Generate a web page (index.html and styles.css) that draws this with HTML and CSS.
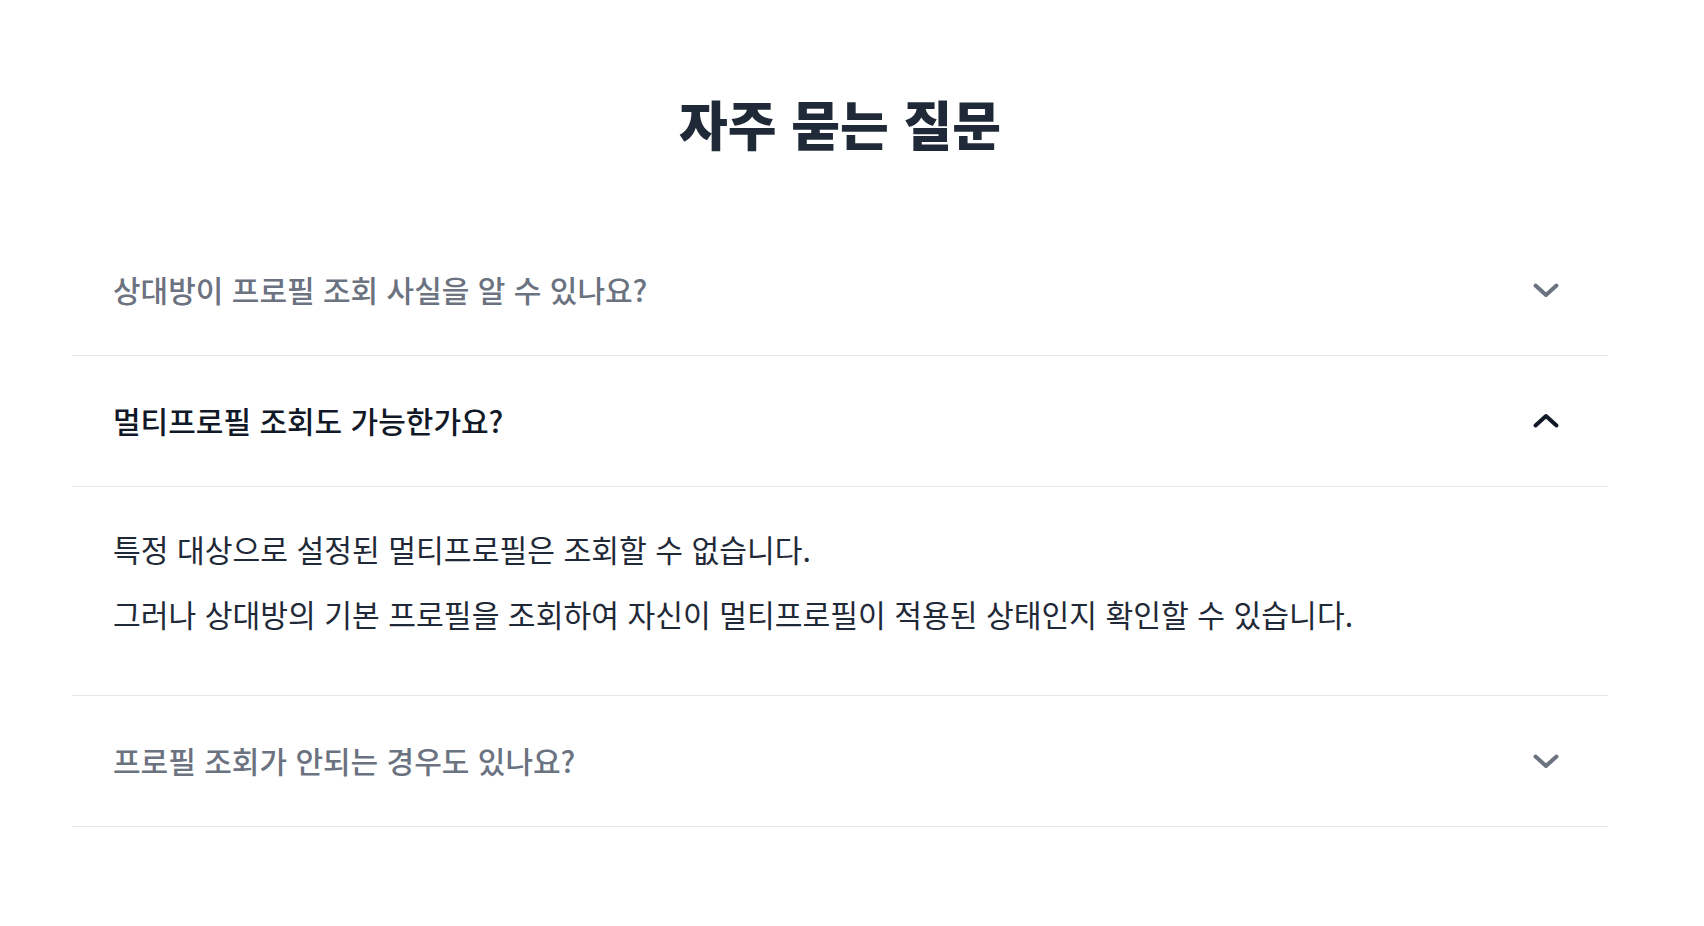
FILE: index.html
```html
<!DOCTYPE html>
<html lang="ko">
<head>
  <meta charset="utf-8">
  <title>자주 묻는 질문</title>
  <meta name="viewport" content="width=device-width, initial-scale=1">
  <link rel="stylesheet" href="styles.css">
</head>
<body>
  <section class="faq">
    <h1 class="faq-title">자주 묻는 질문</h1>

    <div class="faq-list">
      <div class="faq-item">
        <button class="faq-question">
          <span>상대방이 프로필 조회 사실을 알 수 있나요?</span>
          <svg class="chevron" width="28" height="16" viewBox="0 0 28 16"><polyline points="3.5,3.5 14,13 24.5,3.5" /></svg>
        </button>
      </div>

      <div class="faq-item open">
        <button class="faq-question">
          <span>멀티프로필 조회도 가능한가요?</span>
          <svg class="chevron" width="28" height="16" viewBox="0 0 28 16"><polyline points="3.5,12.5 14,3 24.5,12.5" /></svg>
        </button>
        <div class="faq-answer">
          <p>특정 대상으로 설정된 멀티프로필은 조회할 수 없습니다.</p>
          <p>그러나 상대방의 기본 프로필을 조회하여 자신이 멀티프로필이 적용된 상태인지 확인할 수 있습니다.</p>
        </div>
      </div>

      <div class="faq-item">
        <button class="faq-question">
          <span>프로필 조회가 안되는 경우도 있나요?</span>
          <svg class="chevron" width="28" height="16" viewBox="0 0 28 16"><polyline points="3.5,3.5 14,13 24.5,3.5" /></svg>
        </button>
      </div>
    </div>
  </section>
</body>
</html>
```

FILE: styles.css
```css
body {
  margin: 0;
  background-color: #ffffff;
  font-family: "Noto Sans CJK KR", "Noto Sans", sans-serif;
  color: #1f2937;
}
.faq {
  width: 1536px;
  margin-left: 72px;
  padding-top: 94px;
}
.faq-title {
  margin: 0 0 73px;
  text-align: center;
  font-size: 53px;
  line-height: 58px;
  font-weight: 800;
  color: #1f2937;
}
.faq-item {
  border-bottom: 1px solid #e5e7eb;
}
.faq-question {
  display: flex;
  align-items: center;
  justify-content: space-between;
  box-sizing: content-box;
  width: calc(100% - 89px);
  height: 128px;
  padding: 0 48px 2px 41px;
  border: none;
  background: none;
  font-family: inherit;
  font-size: 30px;
  font-weight: 500;
  color: #6b7280;
  text-align: left;
  cursor: pointer;
}
.chevron {
  margin-top: 2px;
}
.chevron polyline {
  fill: none;
  stroke: #6b7280;
  stroke-width: 4;
  stroke-linecap: round;
  stroke-linejoin: round;
}
.open .faq-question {
  color: #111827;
  border-bottom: 1px solid #e5e7eb;
}
.open .chevron polyline {
  stroke: #111827;
}
.faq-answer {
  padding: 40px 41px 58px;
}
.faq-answer p {
  margin: 0;
  font-size: 30.2px;
  line-height: 45px;
  color: #1f2937;
}
.faq-answer p + p {
  margin-top: 20px;
}
```
